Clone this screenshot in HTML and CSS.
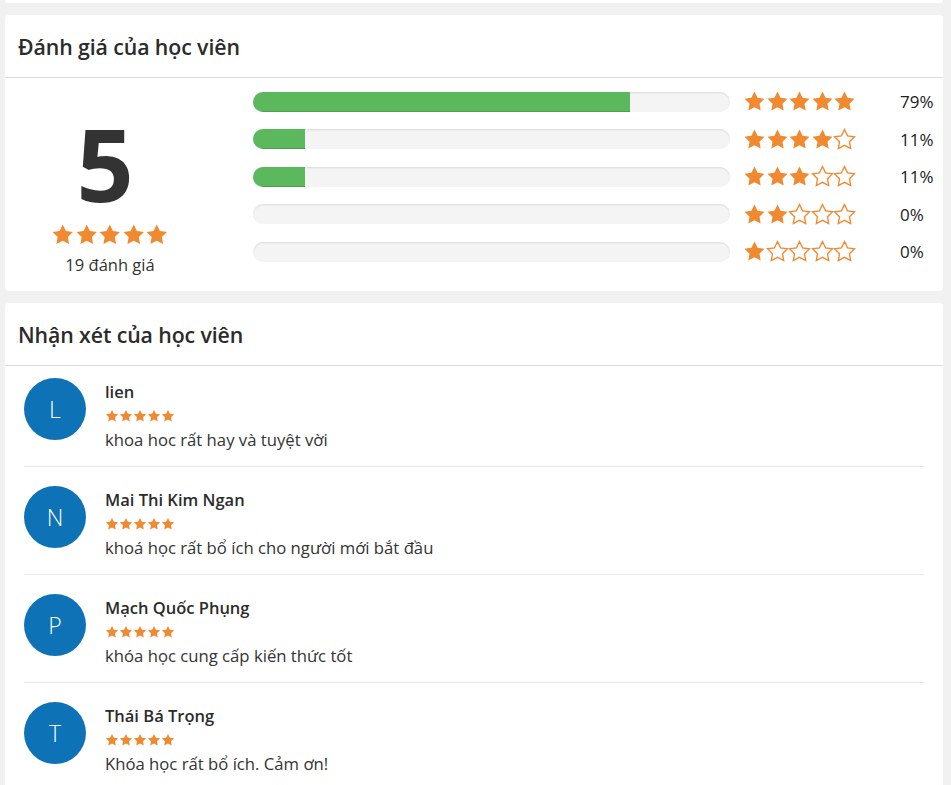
FILE: index.html
```html
<!DOCTYPE html>
<html lang="vi">
<head>
<meta charset="utf-8">
<title>Đánh giá</title>
<link rel="stylesheet" href="styles.css">
</head>
<body>
<svg width="0" height="0" class="defs">
  <defs>
    <path id="star" d="M12 1.6l3.2 6.6 7.2 1-5.2 5.1 1.25 7.2L12 18.1l-6.45 3.4 1.25-7.2-5.2-5.1 7.2-1z"/>
  </defs>
</svg>
<div class="page">
  <div class="prev-card"></div>

  <section class="card">
    <h2 class="card-title">Đánh giá của học viên</h2>
    <div class="rating-body">
      <div class="summary">
        <div class="big">5</div>
        <div class="stars stars-lg">
          <svg viewBox="0 0 24 24"><use href="#star"/></svg>
          <svg viewBox="0 0 24 24"><use href="#star"/></svg>
          <svg viewBox="0 0 24 24"><use href="#star"/></svg>
          <svg viewBox="0 0 24 24"><use href="#star"/></svg>
          <svg viewBox="0 0 24 24"><use href="#star"/></svg>
        </div>
        <div class="count">19 đánh giá</div>
      </div>
      <div class="rows">
        <div class="row">
          <div class="bar"><div class="fill" style="width:79%"></div></div>
          <div class="stars stars-md">
            <svg viewBox="0 0 24 24"><use href="#star"/></svg><svg viewBox="0 0 24 24"><use href="#star"/></svg><svg viewBox="0 0 24 24"><use href="#star"/></svg><svg viewBox="0 0 24 24"><use href="#star"/></svg><svg viewBox="0 0 24 24"><use href="#star"/></svg>
          </div>
          <div class="pct">79%</div>
        </div>
        <div class="row">
          <div class="bar"><div class="fill" style="width:11%"></div></div>
          <div class="stars stars-md">
            <svg viewBox="0 0 24 24"><use href="#star"/></svg><svg viewBox="0 0 24 24"><use href="#star"/></svg><svg viewBox="0 0 24 24"><use href="#star"/></svg><svg viewBox="0 0 24 24"><use href="#star"/></svg><svg class="empty" viewBox="0 0 24 24"><use href="#star"/></svg>
          </div>
          <div class="pct">11%</div>
        </div>
        <div class="row">
          <div class="bar"><div class="fill" style="width:11%"></div></div>
          <div class="stars stars-md">
            <svg viewBox="0 0 24 24"><use href="#star"/></svg><svg viewBox="0 0 24 24"><use href="#star"/></svg><svg viewBox="0 0 24 24"><use href="#star"/></svg><svg class="empty" viewBox="0 0 24 24"><use href="#star"/></svg><svg class="empty" viewBox="0 0 24 24"><use href="#star"/></svg>
          </div>
          <div class="pct">11%</div>
        </div>
        <div class="row">
          <div class="bar"><div class="fill" style="width:0%"></div></div>
          <div class="stars stars-md">
            <svg viewBox="0 0 24 24"><use href="#star"/></svg><svg viewBox="0 0 24 24"><use href="#star"/></svg><svg class="empty" viewBox="0 0 24 24"><use href="#star"/></svg><svg class="empty" viewBox="0 0 24 24"><use href="#star"/></svg><svg class="empty" viewBox="0 0 24 24"><use href="#star"/></svg>
          </div>
          <div class="pct">0%</div>
        </div>
        <div class="row">
          <div class="bar"><div class="fill" style="width:0%"></div></div>
          <div class="stars stars-md">
            <svg viewBox="0 0 24 24"><use href="#star"/></svg><svg class="empty" viewBox="0 0 24 24"><use href="#star"/></svg><svg class="empty" viewBox="0 0 24 24"><use href="#star"/></svg><svg class="empty" viewBox="0 0 24 24"><use href="#star"/></svg><svg class="empty" viewBox="0 0 24 24"><use href="#star"/></svg>
          </div>
          <div class="pct">0%</div>
        </div>
      </div>
    </div>
  </section>

  <section class="card">
    <h2 class="card-title">Nhận xét của học viên</h2>
    <ul class="reviews">
      <li class="review">
        <div class="avatar">L</div>
        <div class="review-body">
          <div class="name">lien</div>
          <div class="stars stars-sm">
            <svg viewBox="0 0 24 24"><use href="#star"/></svg><svg viewBox="0 0 24 24"><use href="#star"/></svg><svg viewBox="0 0 24 24"><use href="#star"/></svg><svg viewBox="0 0 24 24"><use href="#star"/></svg><svg viewBox="0 0 24 24"><use href="#star"/></svg>
          </div>
          <div class="comment">khoa hoc rất hay và tuyệt vời</div>
        </div>
      </li>
      <li class="review">
        <div class="avatar">N</div>
        <div class="review-body">
          <div class="name">Mai Thi Kim Ngan</div>
          <div class="stars stars-sm">
            <svg viewBox="0 0 24 24"><use href="#star"/></svg><svg viewBox="0 0 24 24"><use href="#star"/></svg><svg viewBox="0 0 24 24"><use href="#star"/></svg><svg viewBox="0 0 24 24"><use href="#star"/></svg><svg viewBox="0 0 24 24"><use href="#star"/></svg>
          </div>
          <div class="comment">khoá học rất bổ ích cho người mới bắt đầu</div>
        </div>
      </li>
      <li class="review">
        <div class="avatar">P</div>
        <div class="review-body">
          <div class="name">Mạch Quốc Phụng</div>
          <div class="stars stars-sm">
            <svg viewBox="0 0 24 24"><use href="#star"/></svg><svg viewBox="0 0 24 24"><use href="#star"/></svg><svg viewBox="0 0 24 24"><use href="#star"/></svg><svg viewBox="0 0 24 24"><use href="#star"/></svg><svg viewBox="0 0 24 24"><use href="#star"/></svg>
          </div>
          <div class="comment">khóa học cung cấp kiến thức tốt</div>
        </div>
      </li>
      <li class="review">
        <div class="avatar">T</div>
        <div class="review-body">
          <div class="name">Thái Bá Trọng</div>
          <div class="stars stars-sm">
            <svg viewBox="0 0 24 24"><use href="#star"/></svg><svg viewBox="0 0 24 24"><use href="#star"/></svg><svg viewBox="0 0 24 24"><use href="#star"/></svg><svg viewBox="0 0 24 24"><use href="#star"/></svg><svg viewBox="0 0 24 24"><use href="#star"/></svg>
          </div>
          <div class="comment">Khóa học rất bổ ích. Cảm ơn!</div>
        </div>
      </li>
    </ul>
  </section>
</div>
</body>
</html>
```
FILE: styles.css
```css
* { box-sizing: border-box; }
html, body { margin: 0; padding: 0; }
body {
  background: #f1f1f1;
  font-family: "Open Sans", "Noto Sans", sans-serif;
  color: #333;
  height: 785px;
  overflow: hidden;
}
.defs { position: absolute; }
.page {
  width: 938px;
  margin-left: 5px;
  display: flex;
  flex-direction: column;
  gap: 12px;
}
.prev-card {
  height: 3px;
  background: #fff;
  border-radius: 0 0 4px 4px;
}
.card {
  background: #fff;
  border-radius: 4px;
}
.card-title {
  margin: 0;
  height: 63px;
  padding: 0 13px;
  display: flex;
  align-items: center;
  font-size: 21.3px;
  font-weight: 600;
  color: #2b2b2b;
  border-bottom: 1px solid #dcdcdc;
  letter-spacing: -0.1px;
}
.rating-body {
  display: flex;
  padding: 5px 0 0;
  height: 213px;
}
.summary {
  width: 210px;
  display: flex;
  flex-direction: column;
  align-items: center;
}
.big {
  font-size: 100px;
  font-weight: 700;
  line-height: 100px;
  color: #333;
  margin-top: 30px;
  margin-right: 12px;
  letter-spacing: -2px;
}
.stars { display: flex; }
.stars svg { fill: #f0892f; display: block; }
.stars svg.empty { fill: none; stroke: #f0892f; stroke-width: 1.4; }
.stars-lg { margin-top: 10px; }
.stars-lg svg { width: 23.5px; height: 23.5px; }
.count {
  font-size: 16.5px;
  margin-top: 6px;
  color: #333;
}
.rows {
  margin-left: 38px;
  display: flex;
  flex-direction: column;
}
.row {
  height: 37.5px;
  display: flex;
  align-items: center;
}
.bar {
  width: 477px;
  height: 20px;
  background: #f4f4f4;
  border-radius: 10px;
  box-shadow: inset 0 1px 2px rgba(0,0,0,0.1);
  overflow: hidden;
}
.fill {
  height: 100%;
  background: #5cb85c;
  box-shadow: inset 0 -1px 0 rgba(0,0,0,0.15);
}
.stars-md { margin-left: 13px; width: 157px; }
.stars-md svg { width: 23px; height: 23px; margin-right: -0.4px; }
.pct {
  font-size: 17px;
  color: #222;
}
.reviews {
  list-style: none;
  margin: 0;
  padding: 0 19px;
}
.review {
  display: flex;
  padding: 19px 0 14px;
  border-bottom: 1px solid #e8e8e8;
}
.review:first-child { padding-top: 12px; }
.avatar {
  width: 62px;
  height: 62px;
  border-radius: 50%;
  background: #0e72b6;
  color: #fff;
  font-size: 23px;
  font-weight: 300;
  display: flex;
  align-items: center;
  justify-content: center;
  flex: none;
}
.review-body {
  margin-left: 19px;
  display: flex;
  flex-direction: column;
}
.name {
  font-size: 16.5px;
  font-weight: 600;
  line-height: 24px;
  color: #2b2b2b;
  margin-top: 2px;
}
.stars-sm { margin-top: 5px; }
.stars-sm svg { width: 14px; height: 14px; }
.comment {
  font-size: 16.7px;
  line-height: 24px;
  color: #333;
  margin-top: 5px;
}
```
